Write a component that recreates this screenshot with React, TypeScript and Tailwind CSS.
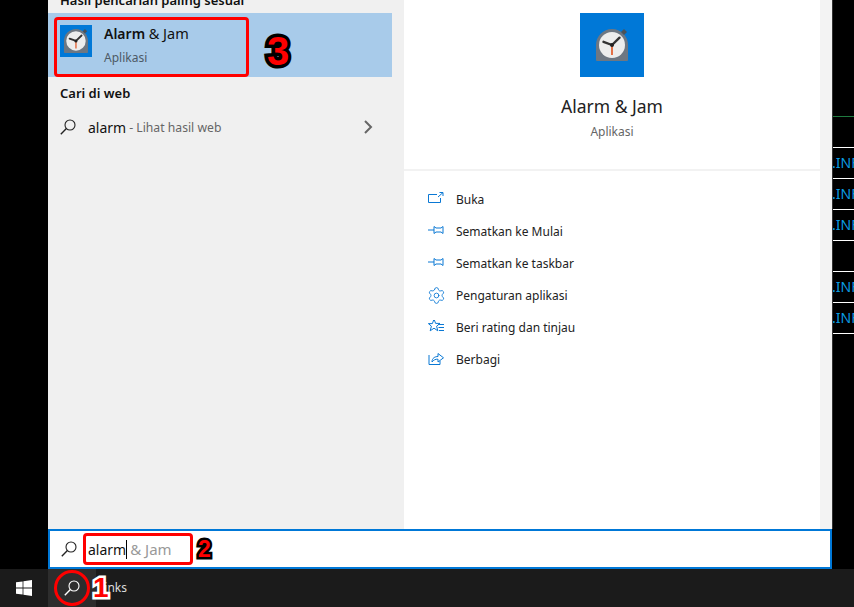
import type { ReactNode } from 'react'
import { Settings } from 'lucide-react'

const font = "font-['Noto_Sans','Open_Sans',sans-serif]"

function SearchIcon({ className }: { className: string }) {
  return (
    <svg viewBox="0 0 16 16" fill="none" stroke="currentColor" strokeWidth="1.1" className={className}>
      <circle cx="10" cy="6" r="5" />
      <path d="M6.4 9.6 L0.8 15.2" strokeWidth="1.4" />
    </svg>
  )
}

function ClockIcon({ size }: { size: number }) {
  // the tile icon fills more of its square than the large one
  const box = size < 40 ? '10.7 10.7 42.7 42.7' : '0 0 64 64'
  return (
    <svg viewBox={box} width={size} height={size} className="shrink-0">
      <rect width="64" height="64" fill="#0078d7" />
      <path d="M16 47 V32 A16 16 0 0 1 48 32 V47 Q48 48 47 48 H17 Q16 48 16 47 Z" fill="#6d7782" />
      <path d="M41 19 L44 16 L47 19 L44 22 Z" fill="#4b5259" />
      <circle cx="32" cy="32" r="13" fill="#eceded" />
      <path d="M32 32 L23.5 28.8" stroke="#333" strokeWidth="2.4" strokeLinecap="round" />
      <path d="M32 32 L39.5 24.7" stroke="#333" strokeWidth="2.4" strokeLinecap="round" />
      <path d="M32 32 V42" stroke="#e2501c" strokeWidth="1.6" />
      <circle cx="32" cy="32" r="2" fill="#222" />
    </svg>
  )
}

const blue = { fill: 'none', stroke: '#0a78d4', strokeWidth: 1 }

const OpenIcon = () => (
  <svg viewBox="0 0 16 16" className="h-4 w-4" {...blue}>
    <path d="M9 2.5 H0.5 V10.5 H12.5 V6" />
    <path d="M10 5 L15 0.5 M11.5 0.5 H15 V4" />
  </svg>
)

const PinIcon = () => (
  <svg viewBox="0 0 16 16" className="h-4 w-4" {...blue}>
    <path d="M0 6 H6 M6 2.5 L8 4 H13 L15 2.5 V9.5 L13 8 H8 L6 9.5 Z" />
  </svg>
)

const GearIcon = () => (
  <Settings strokeWidth={1.1} color="#0a78d4" className="mx-[-1.5px] mt-[-2px] h-[19px] w-[19px]" />
)

const RateIcon = () => (
  <svg viewBox="0 2 16 16" className="h-4 w-4" {...blue}>
    <path d="M6 1 L7.6 5.4 H12 L8.6 8.2 L9.8 12.8 L6 10.2 L2.2 12.8 L3.4 8.2 L0.4 5.6 H4.4 Z" />
    <path d="M10 6.5 H16 M10.5 9.5 H16 M11 12.5 H16" />
  </svg>
)

const ShareIcon = () => (
  <svg viewBox="0 1 16 16" className="h-4 w-4" {...blue}>
    <path d="M1 4 V13.5 H12 V10" />
    <path d="M4 11 C4 7 7 5.5 10 5.5 V2.5 L15.5 6.8 L10 11 V8.2 C7.5 8 5.5 9 4 11 Z" />
  </svg>
)

const actions: { label: string; icon: ReactNode }[] = [
  { label: 'Buka', icon: <OpenIcon /> },
  { label: 'Sematkan ke Mulai', icon: <PinIcon /> },
  { label: 'Sematkan ke taskbar', icon: <PinIcon /> },
  { label: 'Pengaturan aplikasi', icon: <GearIcon /> },
  { label: 'Beri rating dan tinjau', icon: <RateIcon /> },
  { label: 'Berbagi', icon: <ShareIcon /> },
]

const stripRows = [true, true, true, false, true, true]

export default function App() {
  return (
    <div className={`relative h-[607px] w-[854px] overflow-hidden bg-black ${font}`}>
      <div className="flex h-[529px]">
        <div className="w-12" />

        {/* hasil pencarian */}
        <div className="w-[356px] overflow-hidden bg-[#f0f0f0]">
          <div className="mt-[-9px] h-[22px] pl-3 text-[13px] font-semibold leading-[18px] text-[#111]">
            Hasil pencarian paling sesuai
          </div>
          <div className="flex h-16 w-[344px] bg-[#a8cbea] pl-3 pt-3">
            <ClockIcon size={32} />
            <div className="ml-3 mt-[-1px]">
              <div className="text-[14px] leading-[19px] text-[#111]">
                <span className="font-semibold">Alarm</span> <span className="text-[14.5px]">&amp; Jam</span>
              </div>
              <div className="mt-[7px] text-[12px] leading-[16px] text-[#4d5a66]">Aplikasi</div>
            </div>
          </div>
          <div className="mt-[7px] pl-3 text-[13px] font-semibold leading-[18px] text-[#111]">Cari di web</div>
          <div className="mt-[6px] flex h-[38px] w-[344px] items-center pl-3 pr-[19px]">
            <SearchIcon className="h-4 w-4 text-[#222]" />
            <span className="ml-3 text-[14px] text-[#111]">alarm</span>
            <span className="ml-[3px] mt-[2px] text-[12.2px] text-[#666]">- Lihat hasil web</span>
            <svg viewBox="0 0 10 14" className="ml-auto h-[14px] w-[10px]" fill="none" stroke="#666" strokeWidth="2">
              <path d="M2 1 L8 7 L2 13" />
            </svg>
          </div>
        </div>

        {/* detail aplikasi */}
        <div className="w-[416px] bg-white">
          <div className="flex h-[171px] flex-col items-center border-b-2 border-[#f2f2f2] pt-[13px]">
            <ClockIcon size={64} />
            <div className="mt-[17px] text-[17.5px] leading-[24px] text-[#222]">Alarm &amp; Jam</div>
            <div className="mt-[6px] text-[12px] leading-[16px] text-[#666]">Aplikasi</div>
          </div>
          <div className="pl-[24px] pt-[13px]">
            {actions.map((a) => (
              <div key={a.label} className="flex h-8 items-center">
                {a.icon}
                <span className="ml-[12px] text-[12px] text-[#222]">{a.label}</span>
              </div>
            ))}
          </div>
        </div>

        <div className="w-3 bg-[#f3f3f3]" />

        {/* jendela di belakang */}
        <div className="w-[22px] overflow-hidden border-l border-[#333]">
          <div className="mt-[116px] h-px bg-[#1f7a3f]" />
          <div className="mt-[30px] border-t border-white">
            {stripRows.map((hasText, i) => (
              <div key={i} className="h-[31px] whitespace-nowrap border-b border-white text-[14px] leading-[30px] text-[#0a9be0]">
                <span className="ml-[-1px]">{hasText ? '.INF' : ''}</span>
              </div>
            ))}
          </div>
        </div>
      </div>

      {/* kotak pencarian */}
      <div className="ml-12 flex h-10 w-[784px] items-center border-2 border-[#0078d7] bg-white pl-[11px]">
        <SearchIcon className="h-4 w-4 text-[#222]" />
        <span className="ml-[11px] text-[14px] text-[#111]">alarm</span>
        <span className="h-[19px] w-px bg-black" />
        <span className="ml-[3px] text-[15px] text-[#999]">&amp; Jam</span>
      </div>

      {/* taskbar */}
      <div className="flex h-[38px] bg-[#1b1b1b]">
        <div className="flex w-12 items-center justify-center">
          <svg viewBox="0 0 16 16" className="h-4 w-4" fill="#fff">
            <path d="M0 2.3 L6.6 1.4 V7.6 H0 Z M7.4 1.3 L16 0 V7.6 H7.4 Z M0 8.4 H6.6 V14.6 L0 13.7 Z M7.4 8.4 H16 V16 L7.4 14.7 Z" />
          </svg>
        </div>
        <div className="flex w-12 items-center justify-center bg-[#2d2d2d]">
          <SearchIcon className="h-4 w-4 text-white" />
        </div>
        <span className="ml-[2px] self-center text-[12px] text-[#ddd]">Links</span>
      </div>

      {/* anotasi */}
      <div className="absolute left-[54px] top-[17px] h-[60px] w-[195px] rounded-[4px] border-[3px] border-[#f00]" />
      <div className="absolute left-[83px] top-[533px] h-[32px] w-[110px] rounded-[4px] border-[3px] border-[#f00]" />
      <div className="absolute left-[54px] top-[570px] h-9 w-9 rounded-full border-[3px] border-[#f00]" />
      <span className="absolute left-[267px] top-[26px] font-['Liberation_Sans',sans-serif] text-[40px] font-bold leading-[50px] text-[#f00] [-webkit-text-stroke:7px_#000] [paint-order:stroke]">3</span>
      <span className="absolute left-[198px] top-[535px] font-['Liberation_Sans',sans-serif] text-[23px] font-bold leading-[28px] text-[#f00] [-webkit-text-stroke:5px_#000] [paint-order:stroke]">2</span>
      <span className="absolute left-[93px] top-[572px] font-['Liberation_Sans',sans-serif] text-[28px] font-bold leading-[32px] text-[#f00] [-webkit-text-stroke:5px_#fff] [paint-order:stroke]">1</span>
    </div>
  )
}
